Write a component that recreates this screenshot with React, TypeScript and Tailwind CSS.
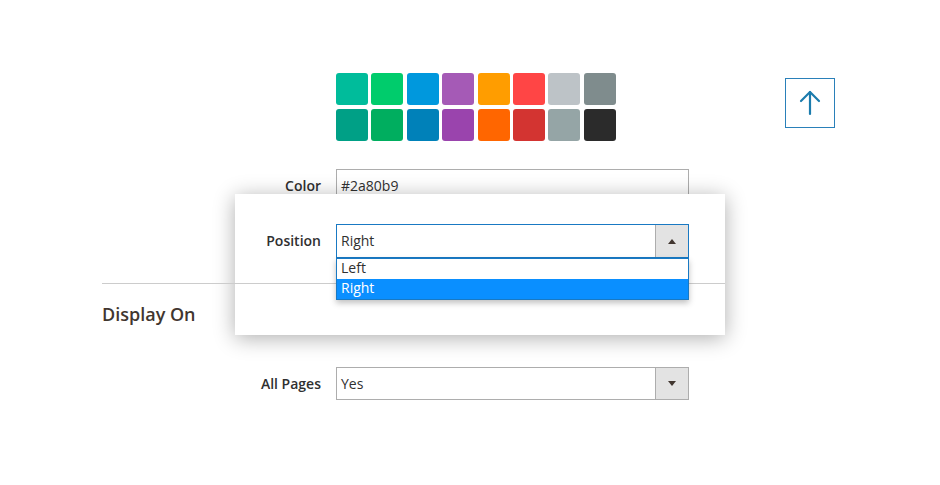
import React from "react";

const row1 = ["#00bc9b", "#00cc6c", "#0098dd", "#a55ab6", "#ff9d00", "#ff4545", "#bdc3c7", "#7f8c8d"];
const row2 = ["#00a086", "#00ae5f", "#0081b9", "#9a44ad", "#ff6600", "#d33431", "#95a5a6", "#2b2b2b"];

function Triangle({ up }: { up?: boolean }) {
  return (
    <svg width="8" height="5" viewBox="0 0 8 5" className="block">
      {up ? <path d="M0 5 L4 0 L8 5 Z" fill="#41362f" /> : <path d="M0 0 L4 5 L8 0 Z" fill="#41362f" />}
    </svg>
  );
}

export default function App() {
  const font = { fontFamily: '"Open Sans", "Noto Sans", sans-serif' };
  return (
    <div className="relative w-[940px] h-[485px] bg-white overflow-hidden text-[#303030]" style={font}>
      <div className="pt-[73px]">
        {/* swatches + arrow */}
        <div className="flex items-start">
          <div className="ml-[336px] w-[353px] flex flex-col gap-[3.5px]">
            {[row1, row2].map((r, i) => (
              <div key={i} className="flex gap-[3.4px]">
                {r.map((c) => (
                  <div key={c} className="w-[32px] h-[32px] rounded-[3px]" style={{ backgroundColor: c }} />
                ))}
              </div>
            ))}
          </div>
          <div className="ml-[96px] mt-[5px] w-[50px] h-[50px] border border-[#2a80b9] flex items-center justify-center">
            <svg width="22" height="28" viewBox="0 0 22 28" fill="none" stroke="#1c7cad" strokeWidth="2.2" strokeLinecap="round" strokeLinejoin="round">
              <path d="M11 25 V3" />
              <path d="M2 12 L11 3 L20 12" />
            </svg>
          </div>
        </div>

        {/* Color row */}
        <div className="flex items-center mt-[28.5px]">
          <div className="w-[321px] text-right text-[14px] font-semibold text-[#303030] pb-[2px]">Color</div>
          <div className="ml-[15px] w-[353px] h-[34px] border border-[#adadad] flex items-center px-[4px] pb-[2px] text-[14px]">#2a80b9</div>
        </div>

        {/* divider */}
        <div className="relative z-20 ml-[102px] w-[623px] h-px bg-[#cccccc] mt-[80px]" />

        <div className="ml-[102px] mt-[19px] text-[18px] font-semibold text-[#41362f] leading-[22px]">Display On</div>

        {/* All Pages row */}
        <div className="flex items-center mt-[42px]">
          <div className="w-[321px] text-right text-[14px] font-semibold text-[#303030]">All Pages</div>
          <div className="ml-[15px] w-[353px] h-[33px] border border-[#adadad] flex">
            <div className="flex-1 flex items-center px-[4px] text-[14px]">Yes</div>
            <div className="w-[33px] bg-[#e3e3e3] border-l border-[#adadad] flex items-center justify-center">
              <Triangle />
            </div>
          </div>
        </div>
      </div>

      {/* overlay panel */}
      <div className="absolute left-[235px] top-[194px] w-[490px] h-[141px] bg-white shadow-[0_3px_20px_rgba(0,0,0,0.32)]">
        <div className="flex items-center mt-[30px]">
          <div className="w-[86px] text-right text-[14px] font-semibold text-[#303030] pb-[1px]">Position</div>
          <div className="relative ml-[15px] w-[353px] h-[34px] border border-[#1979c3] flex">
            <div className="flex-1 flex items-center px-[4px] pb-[1px] text-[14px]">Right</div>
            <div className="w-[33px] bg-[#e3e3e3] border-l border-[#adadad] flex items-center justify-center">
              <Triangle up />
            </div>
            <div className="absolute z-30 left-[-1px] top-[33px] w-[353px] border border-[#1979c3] bg-white shadow-[0_3px_6px_rgba(0,0,0,0.25)] text-[14px] leading-[18px]">
              <div className="h-[20px] px-[4px]">Left</div>
              <div className="h-[20px] px-[4px] bg-[#0a8fff] text-white">Right</div>
            </div>
          </div>
        </div>
      </div>
    </div>
  );
}
